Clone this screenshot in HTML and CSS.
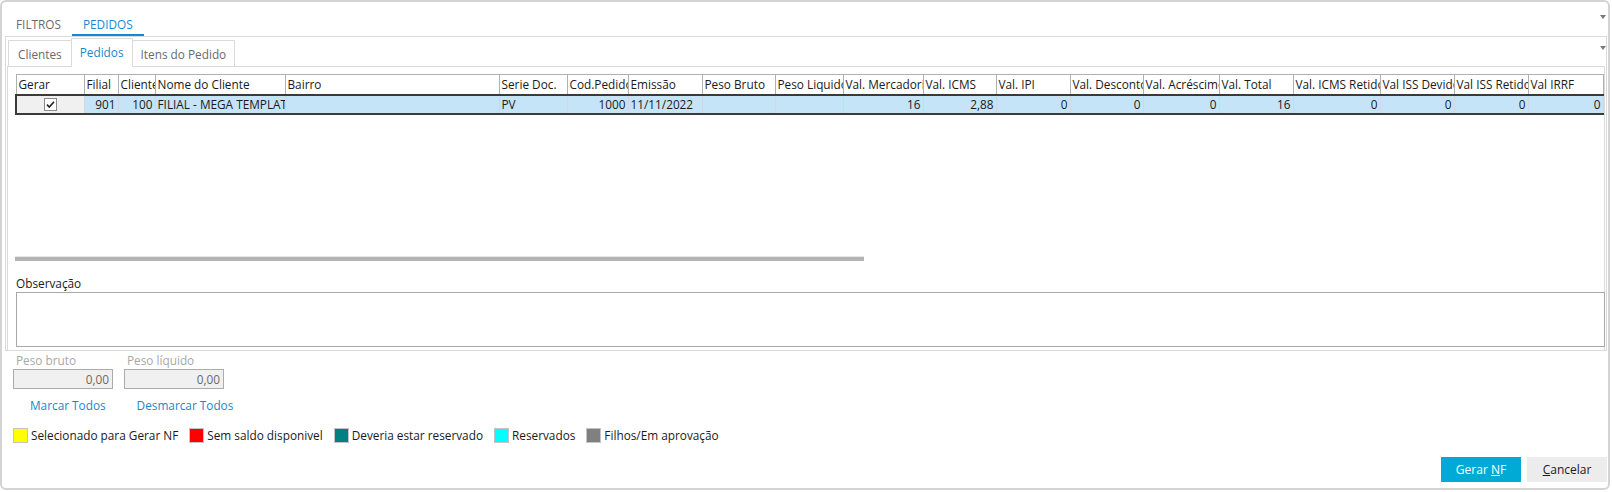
FILE: index.html
```html
<!DOCTYPE html>
<html lang="pt">
<head>
<meta charset="utf-8">
<title>Pedidos</title>
<link rel="stylesheet" href="styles.css">
</head>
<body>
<div class="window">
  <div class="top-tabs">
    <span class="ttab">FILTROS</span>
    <span class="ttab active">PEDIDOS</span>
    <span class="dd-arrow"></span>
  </div>
  <div class="outer-panel">
    <div class="sub-tabs">
      <span class="stab">Clientes</span>
      <span class="stab active">Pedidos</span>
      <span class="stab">Itens do Pedido</span>
      <span class="dd-arrow"></span>
    </div>
    <div class="inner-panel">
      <div class="grid-area">
        <table class="grid">
          <colgroup>
            <col style="width:68px"><col style="width:34px"><col style="width:37px"><col style="width:130px"><col style="width:214px"><col style="width:68px"><col style="width:61px"><col style="width:74px"><col style="width:73px"><col style="width:68px"><col style="width:80px"><col style="width:73px"><col style="width:74px"><col style="width:73px"><col style="width:76px"><col style="width:74px"><col style="width:87px"><col style="width:74px"><col style="width:74px"><col style="width:75px">
          </colgroup>
          <thead>
            <tr>
              <th>Gerar</th><th>Filial</th><th>Cliente</th><th>Nome do Cliente</th><th>Bairro</th><th>Serie Doc.</th><th>Cod.Pedido</th><th>Emissão</th><th>Peso Bruto</th><th>Peso Liquido</th><th>Val. Mercadorias</th><th>Val. ICMS</th><th>Val. IPI</th><th>Val. Desconto</th><th>Val. Acréscimo</th><th>Val. Total</th><th>Val. ICMS Retido</th><th>Val ISS Devido</th><th>Val ISS Retido</th><th>Val IRRF</th>
            </tr>
          </thead>
          <tbody>
            <tr class="sel">
              <td class="chk"><svg class="cb" width="13" height="13" viewBox="0 0 13 13"><rect x="0.5" y="0.5" width="12" height="12" fill="#fff" stroke="#8a8a8a"/><path d="M3 6.6 L5.3 9 L10 3.8" fill="none" stroke="#222" stroke-width="1.6"/></svg></td>
              <td class="num">901</td><td class="num">100</td><td>FILIAL - MEGA TEMPLATE</td><td></td><td>PV</td><td class="num">1000</td><td>11/11/2022</td><td></td><td></td><td class="num">16</td><td class="num">2,88</td><td class="num">0</td><td class="num">0</td><td class="num">0</td><td class="num">16</td><td class="num">0</td><td class="num">0</td><td class="num">0</td><td class="num">0</td>
            </tr>
          </tbody>
        </table>
        <div class="grid-empty"></div>
        <div class="hscroll"></div>
      </div>
      <div class="obs-label">Observação</div>
      <div class="obs-box"></div>
    </div>
  </div>
  <div class="bottom">
    <div class="weights">
      <div class="wgroup">
        <div class="wlabel">Peso bruto</div>
        <div class="winput">0,00</div>
      </div>
      <div class="wgroup">
        <div class="wlabel">Peso líquido</div>
        <div class="winput">0,00</div>
      </div>
    </div>
    <div class="links">
      <span class="link l1">Marcar Todos</span>
      <span class="link l2">Desmarcar Todos</span>
    </div>
    <div class="legend">
      <span class="litem"><span class="sw yellow"></span>Selecionado para Gerar NF</span>
      <span class="litem"><span class="sw red"></span>Sem saldo disponivel</span>
      <span class="litem"><span class="sw teal"></span>Deveria estar reservado</span>
      <span class="litem"><span class="sw cyan"></span>Reservados</span>
      <span class="litem"><span class="sw grey"></span>Filhos/Em aprovação</span>
    </div>
    <div class="buttons">
      <span class="btn primary"><span>Gerar <u>N</u>F</span></span>
      <span class="btn"><span><u>C</u>ancelar</span></span>
    </div>
  </div>
</div>
</body>
</html>
```
FILE: styles.css
```css
* { box-sizing: border-box; }
html, body { margin: 0; padding: 0; background: #fff; }
body {
  font-family: "Open Sans", "Noto Sans", "DejaVu Sans", sans-serif;
  font-size: 11.8px;
  color: #1a1a1a;
  width: 1612px;
  height: 492px;
  overflow: hidden;
}
.window {
  width: 1610px;
  height: 490px;
  border: 2px solid #d3d3d3;
  border-radius: 6px;
  background: #fff;
  display: flex;
  flex-direction: column;
}
.top-tabs {
  height: 34px;
  display: flex;
  align-items: flex-end;
  padding-left: 3px;
  position: relative;
}
.ttab {
  padding: 0 11px;
  height: 34px;
  color: #6a6a6a;
  display: flex;
  align-items: center;
  padding-top: 10px;
}
.ttab.active {
  color: #1a86d0;
  border-bottom: 2px solid #1a86d0;
  padding-top: 12px;
}
.dd-arrow {
  position: absolute;
  right: 2px;
  top: 13px;
  width: 0;
  height: 0;
  border-left: 3.5px solid transparent;
  border-right: 3.5px solid transparent;
  border-top: 4px solid #7a7a7a;
}
.outer-panel {
  margin-left: 3px;
  margin-right: 1px;
  height: 315px;
  border: 1px solid #dadada;
  display: flex;
  flex-direction: column;
}
.sub-tabs {
  height: 29px;
  display: flex;
  align-items: flex-end;
  padding-left: 2px;
  position: relative;
}
.sub-tabs .dd-arrow { top: 9px; right: 0; }
.stab {
  height: 26px;
  padding: 0 8px;
  border: 1px solid #dadada;
  border-bottom: none;
  color: #6a6a6a;
  display: flex;
  align-items: center;
}
.stab:first-child { padding: 0 9px; }
.stab + .stab { margin-left: -1px; }
.stab.active {
  height: 29px;
  color: #1a86d0;
  background: #fff;
  margin-bottom: -1px;
  position: relative;
  z-index: 1;
  padding-bottom: 3px;
}
.inner-panel {
  flex: 1;
  margin-left: 1px;
  margin-right: 1px;
  border: 1px solid #dadada;
  border-bottom: none;
  padding: 7px 2px 0 7px;
  display: flex;
  flex-direction: column;
}
.grid-area {
  height: 188px;
  display: flex;
  flex-direction: column;
}
.grid {
  border-collapse: collapse;
  table-layout: fixed;
  width: 1587px;
}
.grid th, .grid td {
  white-space: nowrap;
  overflow: hidden;
  text-overflow: clip;
  padding: 0 2px;
  text-align: left;
  font-weight: normal;
}
.grid th {
  height: 20px;
  border: 1px solid #b0b0b0;
  border-bottom: 2px solid #3a3a3a;
  color: #1a1a1a;
}
.grid td {
  height: 19px;
  border-left: 1px solid #cfd8de;
  border-right: 1px solid #cfd8de;
  border-bottom: 2px solid #3a3a3a;
  background: #c6e4f7;
}
.grid td:first-child { border-left: 2px solid #3a3a3a; }
.grid td.chk {
  background: #f0f0f0;
  text-align: center;
  padding: 0;
}
.cb { display: block; margin: 0 auto; }
.grid td.num { text-align: right; }
.grid-empty { flex: 1; }
.hscroll {
  width: 849px;
  height: 5px;
  border-top: 1px solid #e6e6e6;
  background: #b4b4b4;
  margin-bottom: 1px;
}
.obs-label {
  margin-top: 12px;
  padding-left: 1px;
  height: 18px;
  line-height: 18px;
}
.obs-box {
  margin-left: 1px;
  width: 1589px;
  height: 55px;
  border: 1px solid #a8a8a8;
}
.bottom {
  flex: 1;
  display: flex;
  flex-direction: column;
  padding-left: 11px;
  padding-right: 1px;
}
.weights {
  display: flex;
  gap: 11px;
  margin-top: 1px;
}
.wgroup { width: 100px; }
.wlabel {
  height: 17px;
  line-height: 17px;
  padding-left: 3px;
  color: #a8a8a8;
}
.winput {
  height: 20px;
  border: 1px solid #ababab;
  background: #f0f0f0;
  color: #6a6a6a;
  text-align: right;
  padding-right: 3px;
  line-height: 18px;
}
.links {
  display: flex;
  height: 17px;
  margin-top: 8px;
  line-height: 17px;
}
.link { color: #1a86d0; }
.l1 { margin-left: 17px; }
.l2 { margin-left: 31px; }
.legend {
  display: flex;
  align-items: center;
  margin-top: 13px;
  height: 16px;
  gap: 11px;
}
.litem {
  display: flex;
  align-items: center;
}
.sw {
  width: 15px;
  height: 15px;
  border: 1px solid #c4c4c4;
  margin-right: 3px;
}
.yellow { background: #ffff00; }
.red { background: #ff0000; }
.teal { background: #008080; }
.cyan { background: #00ffff; }
.grey { background: #808080; }
.buttons {
  display: flex;
  justify-content: flex-end;
  gap: 6px;
  margin-top: 14px;
}
.btn {
  width: 80px;
  height: 25px;
  display: flex;
  align-items: center;
  justify-content: center;
  background: #ececec;
  color: #1a1a1a;
  font-size: 12px;
}
.btn.primary {
  background: #00aad4;
  color: #fff;
}
```
